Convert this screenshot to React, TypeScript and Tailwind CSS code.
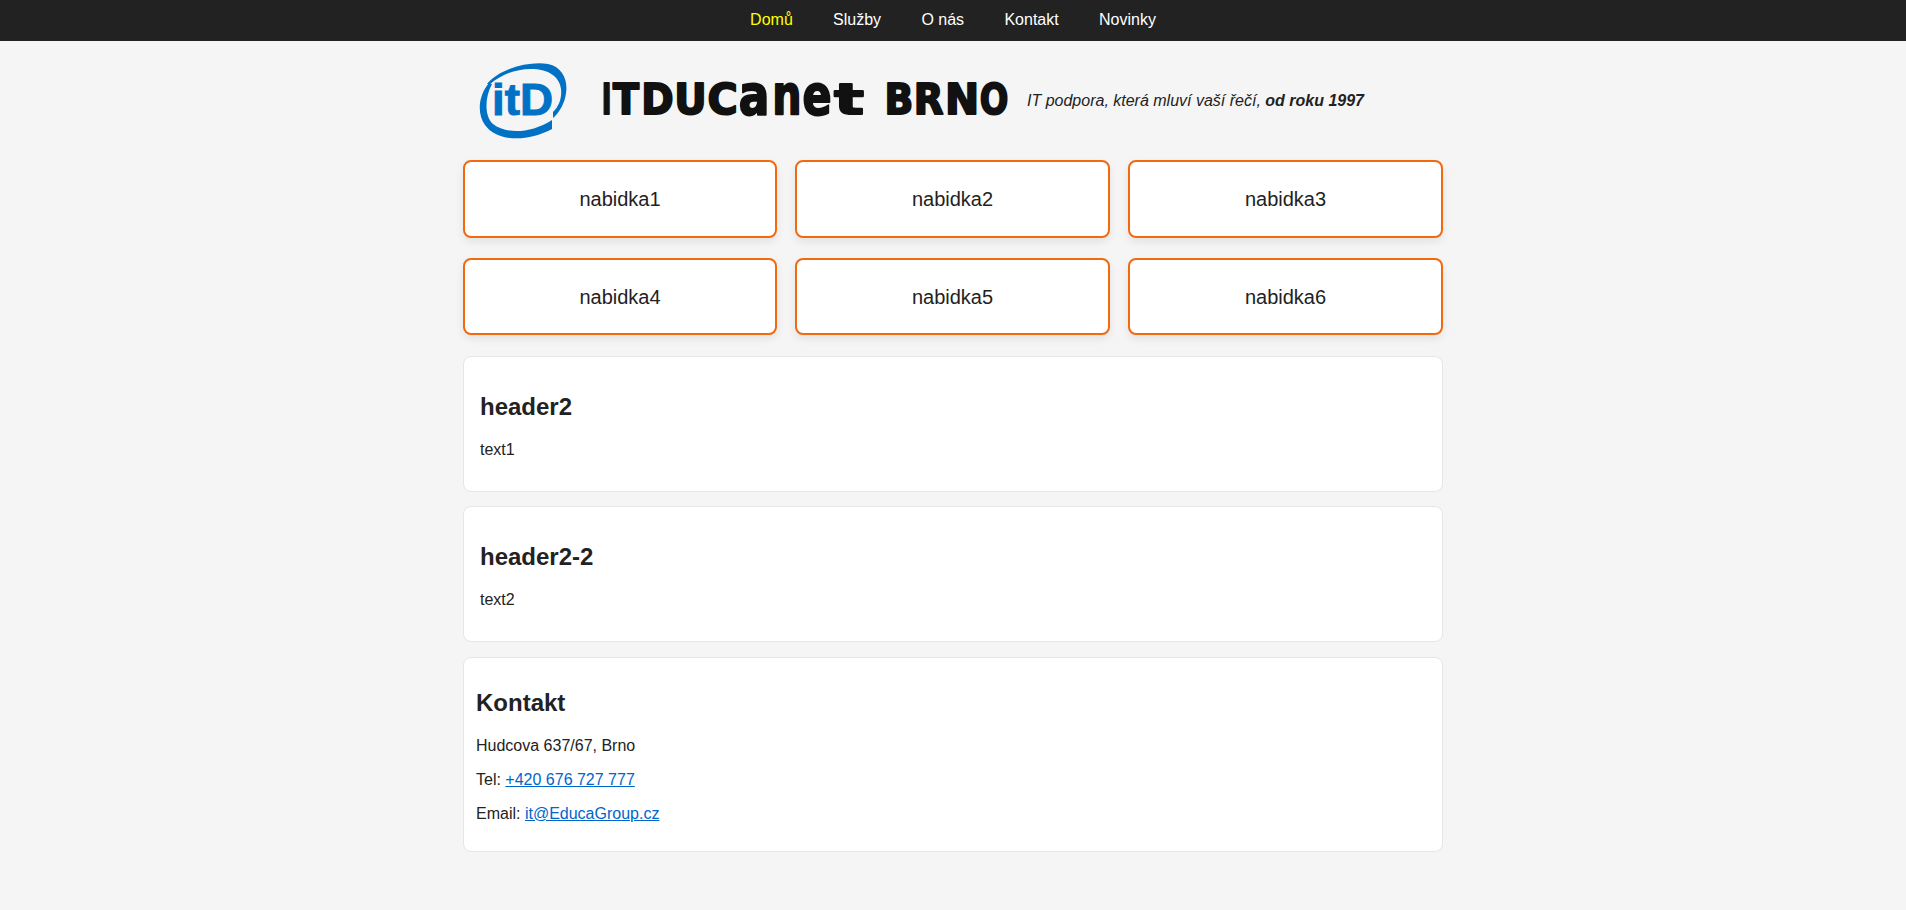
const navLinks = ['Domů', 'Služby', 'O nás', 'Kontakt', 'Novinky'];
const offers = ['nabidka1', 'nabidka2', 'nabidka3', 'nabidka4', 'nabidka5', 'nabidka6'];

// x and width of each wordmark letter off the reference, r = advance / ink of the glyph
const letters = [
  { c: 'I', x: 2, w: 7, s: 42, r: 1.95 },
  { c: 'T', x: 11, w: 28, s: 42, r: 1 },
  { c: 'D', x: 42, w: 29, s: 42, r: 1.2 },
  { c: 'U', x: 75, w: 29, s: 42, r: 1.2 },
  { c: 'C', x: 107, w: 29, s: 42, r: 1.12 },
  { c: 'a', x: 139, w: 28, s: 55, r: 1.18 },
  { c: 'n', x: 173, w: 26, s: 55, r: 1.22 },
  { c: 'e', x: 202, w: 28, s: 55, r: 1.12 },
  { c: 't', x: 234, w: 28, s: 42, r: 1.14 },
  { c: 'B', x: 285, w: 26, s: 42, r: 1.2 },
  { c: 'R', x: 313, w: 29, s: 42, r: 1.1 },
  { c: 'N', x: 346, w: 30, s: 42, r: 1.22 },
  { c: 'O', x: 379, w: 28, s: 42, r: 1.1 },
];

const Logo = () => (
  <svg width="128" height="100" viewBox="13 0 128 100" className="shrink-0">
    <path
      d="M27 33C40 17 70 10 88 13C103 16 108 30 106 42C105 52 99 62 93 67L93 61C99 55 102 47 101 38C100 27 90 19 74 18C58 17 42 23 30 33Z"
      fill="#0071c5"
    />
    <path
      d="M29 32C18 45 17 63 25 74C36 90 66 92 92 78L92 69C70 83 46 83 33 73C25 66 24 48 32 33Z"
      fill="#0071c5"
    />
    <text
      x="32"
      y="64"
      textLength="61"
      lengthAdjust="spacingAndGlyphs"
      fill="#0071c5"
      stroke="#0071c5"
      strokeWidth="1"
      fontSize="45"
      fontWeight="700"
      fontFamily="'Liberation Sans', Arial, sans-serif"
    >
      itD
    </text>
  </svg>
);

const Wordmark = () => (
  <svg width="408" height="76" viewBox="0 0 408 76" className="shrink-0">
    {letters.map((l) => {
      const length = (l.w - 2) * l.r;
      return (
        <text
          key={l.x}
          x={l.x + l.w / 2 - length / 2}
          y="51"
          fontSize={l.s}
          textLength={length}
          lengthAdjust="spacingAndGlyphs"
          fill="#111111"
          stroke="#111111"
          strokeWidth="2"
          strokeLinejoin="round"
          fontWeight="700"
          fontFamily="'DejaVu Sans', sans-serif"
        >
          {l.c}
        </text>
      );
    })}
  </svg>
);

export default function App() {
  return (
    <div className="min-h-[910px] bg-[#f5f5f5] text-[#222222] font-['Liberation_Sans',Arial,sans-serif] leading-[18.4px]">
      <nav className="flex h-[41px] items-center justify-center gap-[40.3px] bg-[#222222] pb-[1px] text-white">
        {navLinks.map((link, i) => (
          <a key={link} href="#" className={i === 0 ? 'text-[#ffff00]' : 'text-white'}>
            {link}
          </a>
        ))}
      </nav>

      <main className="mx-auto w-[980px]">
        <header className="flex h-[119px] items-center pl-[10px]">
          <Logo />
          <Wordmark />
          <p className="ml-[18px] pt-[2px] italic">
            IT podpora, která mluví vaší řečí, <strong>od roku 1997</strong>
          </p>
        </header>

        <div className="grid grid-cols-[314px_315px_315px] gap-x-[18px] gap-y-5">
          {offers.map((offer) => (
            <div
              key={offer}
              className="flex h-[77.6px] items-center justify-center rounded-lg border-2 border-[#f2690f] bg-white pt-[2px] text-[20px] leading-[23px] shadow-[0_4px_8px_rgba(0,0,0,0.08)]"
            >
              {offer}
            </div>
          ))}
        </div>

        <section className="mt-[21px] rounded-lg border border-[#e6e6e6] bg-white p-4">
          <h2 className="my-5 text-[24px] leading-[27.6px] font-bold">header2</h2>
          <p className="mb-4">text1</p>
        </section>

        <section className="mt-[14px] rounded-lg border border-[#e6e6e6] bg-white p-4">
          <h2 className="my-5 text-[24px] leading-[27.6px] font-bold">header2-2</h2>
          <p className="mb-4">text2</p>
        </section>

        <section className="mt-[15px] rounded-lg border border-[#e6e6e6] bg-white px-3 pt-[11px] pb-3 leading-[18px]">
          <h2 className="my-5 text-[24px] leading-[27.6px] font-bold">Kontakt</h2>
          <p className="mb-4">Hudcova 637/67, Brno</p>
          <p className="mb-4">
            Tel: <a href="#" className="text-[#0066cc] underline">+420 676 727 777</a>
          </p>
          <p className="mb-4">
            Email: <a href="#" className="text-[#0066cc] underline">it@EducaGroup.cz</a>
          </p>
        </section>
      </main>
    </div>
  );
}
